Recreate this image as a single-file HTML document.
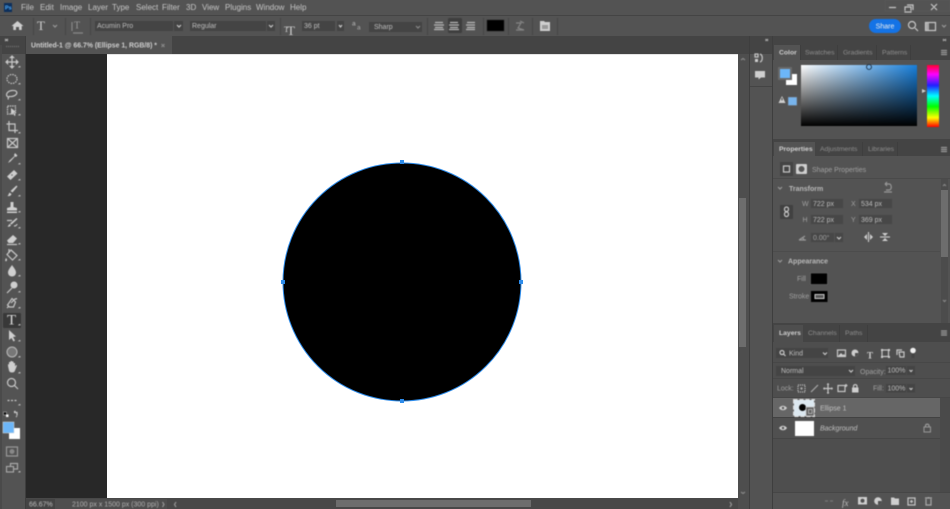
<!DOCTYPE html>
<html><head><meta charset="utf-8"><style>
html,body{margin:0;padding:0;width:950px;height:509px;overflow:hidden;background:#535353}
svg{display:block;position:absolute;left:0;top:0}
text{font-family:"Liberation Sans",sans-serif;font-size:7px;fill:#bdbdbd;dominant-baseline:middle}
.m text{font-size:8px;fill:#c6c6c6}
.i{fill:none;stroke:#c8c8c8;stroke-width:1.200}
.f{fill:#cfcfcf;stroke:none}
.soft{filter:blur(.5px)}
</style></head><body>
<svg width="950" height="509" viewBox="0 0 950 509" xmlns="http://www.w3.org/2000/svg">
<rect width="950" height="509" fill="#535353"/>
<rect y="15" width="950" height="1" fill="#444"/>
<rect y="36" width="950" height="18" fill="#444"/>
<rect x="0" y="36" width="26" height="9" fill="#444"/>
<rect x="0" y="45" width="2" height="464" fill="#4a4a4a"/>
<rect x="25" y="36" width="1" height="473" fill="#3e3e3e"/>
<rect x="26" y="36" width="146" height="18" fill="#535353"/>
<rect x="26" y="54" width="712" height="445" fill="#282828"/>
<rect x="107" y="54" width="631" height="444" fill="#fff"/>
<rect x="107" y="54" width="631" height="1" fill="#e4e4e4"/>
<rect x="738" y="54" width="11" height="455" fill="#4e4e4e"/>
<rect x="739" y="198" width="7" height="149" fill="#6d6d6d"/>
<rect x="26" y="498" width="712" height="11" fill="#484848"/>
<rect x="26" y="499" width="29" height="10" fill="#444"/>
<rect x="55" y="499" width="112" height="10" fill="#4e4e4e"/>
<rect x="336" y="500" width="195" height="7" fill="#6d6d6d"/>
<rect x="749" y="36" width="1" height="473" fill="#3e3e3e"/>
<rect x="772" y="36" width="1" height="473" fill="#3e3e3e"/>
<rect x="750" y="36" width="22" height="9" fill="#444"/>
<rect x="750" y="86" width="22" height="1" fill="#444"/>

<!-- panels -->
<rect x="773" y="36" width="177" height="9" fill="#444"/>
<rect x="773" y="45" width="177" height="15" fill="#444"/>
<rect x="774" y="45" width="26" height="15" fill="#535353"/>
<rect x="800" y="45" width="1" height="15" fill="#3e3e3e"/><rect x="837" y="45" width="1" height="15" fill="#3e3e3e"/><rect x="876" y="45" width="1" height="15" fill="#3e3e3e"/><rect x="910" y="45" width="1" height="15" fill="#3e3e3e"/>
<rect x="773" y="139" width="177" height="17" fill="#444"/>
<rect x="774" y="142" width="41" height="14" fill="#535353"/>
<rect x="862" y="142" width="1" height="14" fill="#3e3e3e"/><rect x="897" y="142" width="1" height="14" fill="#3e3e3e"/>
<rect x="773" y="323" width="177" height="19" fill="#444"/>
<rect x="774" y="325" width="29" height="17" fill="#4e4e4e"/>
<rect x="839" y="325" width="1" height="17" fill="#3e3e3e"/><rect x="867" y="325" width="1" height="17" fill="#3e3e3e"/>
<rect x="773" y="342" width="177" height="167" fill="#4e4e4e"/>
<rect x="773" y="178" width="177" height="1" fill="#4a4a4a"/>
<rect x="773" y="251" width="167" height="1" fill="#4c4c4c"/>
<rect x="773" y="362" width="177" height="1" fill="#474747"/>
<rect x="773" y="378" width="177" height="1" fill="#474747"/>
<rect x="773" y="397" width="177" height="1" fill="#464646"/>
<rect x="773" y="398" width="167" height="19" fill="#666"/>
<rect x="773" y="417" width="167" height="1" fill="#424242"/>
<rect x="773" y="418" width="167" height="20" fill="#505050"/>
<rect x="773" y="438" width="167" height="1" fill="#464646"/>
<rect x="940" y="398" width="10" height="95" fill="#4a4a4a"/>
<rect x="773" y="493" width="177" height="16" fill="#535353"/>
<rect x="773" y="492" width="177" height="1" fill="#464646"/>
<rect x="941" y="179" width="7" height="144" fill="#4c4c4c"/>
<rect x="941" y="190" width="7" height="67" fill="#6d6d6d"/>

<!-- Circle -->
<circle cx="402" cy="282" r="119" fill="#000" stroke="#2d8ceb" stroke-width="1"/>
<g fill="#2d8ceb"><rect x="400" y="160" width="4" height="4"/><rect x="400" y="399" width="4" height="4"/><rect x="281" y="280" width="4" height="4"/><rect x="519" y="280" width="4" height="4"/></g>

<g class="soft">
<!-- Menu -->
<rect x="4" y="3" width="8" height="9" fill="#0c2f5c"/><text x="5" y="8" style="font-size:5.500px;fill:#4fb0ff;font-weight:bold">Ps</text>
<g class="m">
<text x="21" y="8">File</text><text x="40" y="8">Edit</text><text x="60" y="8">Image</text><text x="88" y="8">Layer</text><text x="112" y="8">Type</text><text x="136" y="8">Select</text><text x="162" y="8">Filter</text><text x="186" y="8">3D</text><text x="202" y="8">View</text><text x="225" y="8">Plugins</text><text x="256" y="8">Window</text><text x="290" y="8">Help</text>
</g>
<!-- Window controls -->
<path class="i" d="M889 7.500h7M907 5h6v5M905 7h6v5h-6zM931 4l6 6M937 4l-6 6"/>
<rect x="885" y="0" width="65" height="11" fill="none" stroke="#5c5c5c" stroke-width=".6"/>

<!-- Options bar -->
<path class="f" d="M17.500 21l6 5h-1.800v4h-2.700v-3h-3v3H13.300v-4H11.500z"/>
<rect x="33" y="18" width="1" height="17" fill="#474747"/>
<text x="37" y="27" style="font-family:'Liberation Serif',serif;font-size:13px;fill:#d0d0d0">T</text>
<path class="i" d="M53 25l2 2 2-2" stroke-width=".9" style="stroke:#999"/>
<rect x="65" y="18" width="1" height="17" fill="#474747"/>
<text x="74" y="26" style="font-family:'Liberation Serif',serif;font-size:10px;fill:#999">T</text><path class="i" d="M72 22v9M73 33h10" style="stroke:#888" stroke-width=".8"/>
<rect x="90" y="18" width="1" height="17" fill="#474747"/>
<rect x="95" y="21" width="78" height="10" fill="#444"/><text x="97" y="26">Acumin Pro</text>
<rect x="174" y="21" width="9" height="10" fill="#444"/><path class="i" d="M177 25l2 2 2-2" stroke-width=".8"/>
<rect x="190" y="21" width="76" height="10" fill="#444"/><text x="192" y="26">Regular</text>
<rect x="267" y="21" width="8" height="10" fill="#444"/><path class="i" d="M269 25l2 2 2-2" stroke-width=".8"/>
<rect x="280" y="18" width="1" height="17" fill="#474747"/>
<text x="287" y="32" style="font-family:'Liberation Serif',serif;font-size:13px;fill:#d0d0d0">T</text><text x="284" y="30" style="font-family:'Liberation Serif',serif;font-size:8px;fill:#d0d0d0">T</text>
<rect x="302" y="21" width="33" height="10" fill="#444"/><text x="304" y="26">36 pt</text>
<rect x="337" y="21" width="7" height="10" fill="#444"/><path class="i" d="M339 25l1.500 2 1.500-2" stroke-width=".8"/>
<text x="352" y="24" style="font-size:6.500px">a</text><text x="357" y="28" style="font-size:6.500px;fill:#aaa">a</text>
<rect x="369" y="22" width="53" height="10" fill="#444"/><text x="374" y="27">Sharp</text><path class="i" d="M416 26l2 2 2-2" stroke-width=".8" style="stroke:#888"/>
<rect x="427" y="18" width="1" height="17" fill="#474747"/>
<rect x="448" y="18" width="14" height="15" rx="1" fill="#3e3e3e"/>
<path d="M435 22.500h8M434 25h10M435 27.500h8M434 29.500h10M450 22.500h8M449 25h10M450 27.500h8M449 29.500h10M467 22.500h8M466 25h9M467 27.500h8M466 29.500h9" fill="none" stroke="#b8b8b8" stroke-width="1.300"/>
<rect x="483" y="18" width="1" height="17" fill="#474747"/>
<rect x="487" y="20" width="17" height="11" fill="#000" stroke="#222" stroke-width=".5"/>
<rect x="508" y="18" width="1" height="17" fill="#474747"/>
<path class="i" d="M516 23h5l-3 5 6 2h-8M520 21l4 2" style="stroke:#858585"/>
<rect x="532" y="18" width="1" height="17" fill="#474747"/>
<path class="f" d="M540 21h4l1 1h5v9h-10z"/><rect x="542" y="25" width="6" height="4" fill="#999"/>
<rect x="557" y="18" width="1" height="17" fill="#474747"/>

<!-- Share etc -->
<rect x="869" y="19" width="32" height="14" rx="7" fill="#1473e6"/><text x="885" y="26.500" text-anchor="middle" style="fill:#eee;font-size:7px">Share</text>
<circle cx="912" cy="25" r="3.500" class="i"/><path class="i" d="M915 28l3 3"/>
<rect x="925.500" y="22.500" width="10" height="8" class="i"/><rect x="926" y="23" width="3" height="7" fill="#aaa"/>
<path class="i" d="M942 25l2 2 2-2" stroke-width=".8" style="stroke:#999"/>

<!-- Tab -->
<text x="31" y="45.500" textLength="126" lengthAdjust="spacingAndGlyphs" style="font-size:7.500px;fill:#d0d0d0;font-weight:bold">Untitled-1 @ 66.7% (Ellipse 1, RGB/8) *</text>
<path class="i" d="M161.500 44l3 3M164.500 44l-3 3" stroke-width=".7" style="stroke:#888"/>
<path class="i" d="M5 39l1.500 1-1.500 1M8 39l-1.500 1 1.500 1" stroke-width=".6" style="stroke:#aaa"/>
<path class="i" d="M6 46.500h14" stroke-width=".6" stroke-dasharray="1 1" style="stroke:#777"/>

<!-- Tools -->
<rect x="3" y="313" width="18" height="15" rx="1" fill="#383838"/>
<g>
<path class="i" d="M12 56.500v11M6.500 62h11M12 56l-1.500 1.500h3zM12 68l-1.500-1.500h3zM6 62l1.500-1.500v3zM18 62l-1.500-1.500v3z"/>
<ellipse cx="12" cy="79" rx="5" ry="4.500" class="i" stroke-dasharray="1.500 1"/>
<path class="i" d="M8 97c-3-2-1-6 4-6.500s6 2.500 3.500 4.500-5 1.500-6.500 1.500c-1 1-.5 2-1 3"/>
<rect x="7.500" y="106" width="8" height="8" class="i" stroke-dasharray="1.500 .8"/><path class="f" d="M11 108l5 4-2 .5 1.500 3-1 .5-1.500-3-2 1.500z"/>
<path class="i" d="M9 121v9.500h9M6.500 124h8.500v9"/>
<rect x="7.500" y="138.500" width="10" height="9" class="i"/><path class="i" d="M7.500 138.500l10 9M17.500 138.500l-10 9" stroke-width=".9"/>
<path class="f" d="M15 153l2.500 2.500-1.500 1.500-1-.5-4.500 5-2.500 1.500 1.500-2.500 5-4.500-.5-1z"/>
<path class="f" d="M14 170l3.500 3.500-7 6.500-3.500-3.500z"/><circle cx="12" cy="175" r=".8" fill="#666"/>
<path class="f" d="M16.500 185.500l1 1-5 6-2-1.500zM9.500 192.500l2 1.500c-.5 2-2.500 2.500-4 2 1-.8 1-2 2-3.500z"/>
<path class="f" d="M10.500 202h3v5l3.500 1v2.500H7V208l3.500-1zM7 211.500h10v1.500H7z"/>
<path class="f" d="M16.500 218l1 1-6 5.500-1.500-1zM9.500 224l1.500 1c-.5 1.500-2 2-3.500 1.500.8-.5 1-1.500 2-2.500z"/><path class="i" d="M7 220.500h5M14 226c1 0 3-.5 3-2" stroke-width=".8"/>
<path class="f" d="M13 235l4 3.500-4 4.500H8.500l-1.500-2.500z"/><path class="i" d="M7 244.500h10" stroke-width=".7"/>
<path class="i" d="M11 250l6 5.500-4.500 4.500-5.500-5.500zM9 249v4"/><path class="f" d="M6 258c1 1 1.500 2 .5 3s-2-.5-.5-3z"/>
<path class="f" d="M12 265c2 3 4 5 4 7.500s-2 4-4 4-4-1.500-4-4 2-4.500 4-7.500z"/>
<circle cx="14" cy="285" r="3.500" class="f"/><path class="i" d="M12 288l-5 5" stroke-width="1.600"/>
<path class="i" d="M12 298.500l3.500 3.500-2 5h-4l-2-2z M11 303l3-3M7 308l2-2M14 299.500l3-1"/>
<text x="7" y="321" style="font-family:'Liberation Serif',serif;font-size:15px;fill:#dcdcdc">T</text>
<path class="f" d="M9 330l7 6.500-3 .5 2 3.500-1.500 1-2-3.500L9 340z"/>
<circle cx="12" cy="352" r="5" fill="#777" stroke="#bbb" stroke-width="1"/>
<path class="f" d="M8 366v-2l1 .5v-2.500l1.500 0v-1l1.500 0 0 .5 1.500 0 0 1.500 1.500 0 0 3.500 1-1.500 1 .5-2 5c-.5 1.500-1.500 2-3 2s-2.500-.5-3-2z"/>
<circle cx="11.500" cy="382.500" r="4" class="i"/><path class="i" d="M14.500 385.500l3.500 3.500" stroke-width="1.500"/>
<path class="i" d="M7.500 400.500h2M11 400.500h2M14.500 400.500h2" stroke-width="1.600"/>
<rect x="3.500" y="412" width="3" height="3" fill="#000" stroke="#ccc" stroke-width=".5"/><rect x="6" y="414.500" width="2.500" height="2.500" fill="#fff"/>
<path class="i" d="M14 412.500h3v3M14 412l1.500-1M17 416l-1 1" stroke-width=".8"/>
<rect x="9" y="428" width="11" height="11" fill="#fff"/>
<rect x="3" y="422" width="11" height="11" fill="#6cb6f8" stroke="#ddd" stroke-width=".5"/>
<rect x="6.500" y="447" width="11" height="9" class="i" style="stroke:#999"/><circle cx="12" cy="451.500" r="2.500" fill="#888"/>
<rect x="10.500" y="463.500" width="7" height="5.500" class="i" style="stroke:#aaa"/><rect x="6.500" y="466.500" width="7" height="5.500" fill="#535353" stroke="#aaa" stroke-width="1.100"/>
</g>
<path fill="#b0b0b0" d="M19 66h1.500v1.500H18zM19 83h1.500v1.500H18zM19 99h1.500v1.500H18zM19 114h1.500v1.500H18zM19 132h1.500v1.500H18zM19 163h1.500v1.500H18zM19 179h1.500v1.500H18zM19 195h1.500v1.500H18zM19 211h1.500v1.500H18zM19 227h1.500v1.500H18zM19 243h1.500v1.500H18zM19 259h1.500v1.500H18zM19 275h1.500v1.500H18zM19 291h1.500v1.500H18zM19 307h1.500v1.500H18zM19 324h1.500v1.500H18zM19 340h1.500v1.500H18zM19 356h1.500v1.500H18zM19 372h1.500v1.500H18zM19 404h1.500v1.500H18zM19 471h1.500v1.500H18z"/>

<!-- Status -->
<text x="29" y="504.500" style="font-size:7px">66.67%</text>
<text x="72" y="504.500" style="font-size:7px;fill:#b0b0b0">2100 px x 1500 px (300 ppi)</text>
<path class="i" d="M162.500 502l1.500 2.500-1.500 2.500M176 502l-1.500 2.500 1.500 2.500M730 502l1.500 2.500-1.500 2.500" stroke-width=".7" style="stroke:#999"/>
<path class="i" d="M741 492l2 1.500 2-1.500M741 60l2-1.500 2 1.500" stroke-width=".7" style="stroke:#888"/>

<!-- Dock -->
<path class="i" d="M765.500 39l1 1-1 1M768 39l-1 1 1 1M943 39l1 1-1 1M946 39l-1 1 1 1" stroke-width=".6" style="stroke:#aaa"/>
<rect x="755" y="54" width="3" height="3" class="i" stroke-width=".8"/><rect x="755" y="59" width="3" height="3" class="f"/>
<path class="i" d="M760 54c3 1 3 7 0 8" stroke-width="1"/>
<path class="f" d="M755 71h10v6.500h-4l-2.500 2v-2H755z"/>

<!-- Color panel -->
<text x="779" y="52.500" style="fill:#d0d0d0;font-weight:bold;font-size:6.800px">Color</text>
<text x="805" y="52.500" style="fill:#8e8e8e;font-size:6.800px">Swatches</text>
<text x="843" y="52.500" style="fill:#8e8e8e;font-size:6.800px">Gradients</text>
<text x="882" y="52.500" style="fill:#8e8e8e;font-size:6.800px">Patterns</text>
<path class="i" d="M941 50.500h6M941 52.500h6M941 54.500h6" stroke-width=".8" style="stroke:#999"/>
<rect x="786" y="74" width="11" height="11" fill="#fff"/>
<rect x="778" y="67" width="14" height="13" fill="#6a6a6a"/><rect x="780" y="69" width="10" height="9" fill="#6cb6f8"/>
<defs>
<linearGradient id="h1"><stop offset="0" stop-color="#fff"/><stop offset="1" stop-color="#187fda"/></linearGradient>
<linearGradient id="h2" x2="0" y2="1"><stop offset="0" stop-color="#000" stop-opacity="0"/><stop offset="1" stop-color="#000"/></linearGradient>
<linearGradient id="h3" x2="0" y2="1"><stop offset="0" stop-color="#ff0030"/><stop offset=".15" stop-color="#f0f"/><stop offset=".33" stop-color="#2020ff"/><stop offset=".5" stop-color="#0ff"/><stop offset=".67" stop-color="#0f0"/><stop offset=".85" stop-color="#ff0"/><stop offset="1" stop-color="#f00"/></linearGradient>
</defs>
<rect x="801" y="65" width="116" height="61" fill="url(#h1)"/><rect x="801" y="65" width="116" height="61" fill="url(#h2)"/>
<rect x="927" y="65" width="12" height="62" fill="url(#h3)"/>
<circle cx="869" cy="67" r="2.500" fill="none" stroke="#123" stroke-width=".8"/>
<path class="f" d="M922 89l4 2-4 2z"/>
<path class="f" d="M782 96l3.500 7h-7z"/><rect x="781.500" y="98" width="1" height="2.500" fill="#444"/>
<rect x="788" y="97" width="9" height="8.500" fill="#78b4ec" stroke="#666" stroke-width=".5"/>

<!-- Properties -->
<text x="779" y="149" style="fill:#d0d0d0;font-weight:bold;font-size:6.800px">Properties</text>
<text x="820" y="149" style="fill:#8e8e8e;font-size:6.800px">Adjustments</text>
<text x="868" y="149" style="fill:#8e8e8e;font-size:6.800px">Libraries</text>
<path class="i" d="M941 147.500h6M941 149.500h6M941 151.500h6" stroke-width=".8" style="stroke:#999"/>
<rect x="780" y="162" width="13" height="14" fill="#444"/>
<rect x="783.500" y="166" width="6" height="6" class="i" stroke-width=".8"/>
<rect x="796" y="164" width="11" height="10" rx="1" class="f"/><circle cx="801.500" cy="169" r="3" fill="#555"/>
<text x="812" y="170" style="fill:#a0a0a0">Shape Properties</text>
<path class="i" d="M778 187l2 2 2-2" stroke-width=".8" style="stroke:#999"/>
<text x="789" y="189" style="font-weight:bold;fill:#b8b8b8">Transform</text>
<path class="i" d="M885 184h4c3 0 3 6 0 6h-3M885 184l2-2M885 184l2 2M884 192h8" stroke-width=".8" style="stroke:#999"/>
<rect x="780" y="205" width="13" height="14" fill="#414141"/>
<rect x="784.500" y="207" width="4" height="4.500" rx="2" class="i" stroke-width=".8"/><rect x="784.500" y="212" width="4" height="4.500" rx="2" class="i" stroke-width=".8"/>
<rect x="811" y="199" width="32" height="9" fill="#474747"/><rect x="859" y="199" width="33" height="9" fill="#474747"/>
<rect x="811" y="215" width="32" height="9" fill="#474747"/><rect x="859" y="215" width="33" height="9" fill="#474747"/>
<rect x="811" y="233" width="23" height="9" fill="#474747"/><rect x="835" y="233" width="8" height="9" fill="#474747"/>
<text x="802" y="204" style="fill:#a0a0a0">W</text><text x="813" y="204">722 px</text><text x="851" y="204" style="fill:#a0a0a0">X</text><text x="861" y="204">534 px</text>
<text x="802.500" y="220" style="fill:#a0a0a0">H</text><text x="813" y="220">722 px</text><text x="851" y="220" style="fill:#a0a0a0">Y</text><text x="861" y="220">369 px</text>
<path class="i" d="M799 240l6-4M799 240h7M803 238l1 2" stroke-width=".8" style="stroke:#999"/>
<text x="813" y="238" style="fill:#a0a0a0">0.00°</text><path class="i" d="M837 237l2 2 2-2" stroke-width=".7"/>
<path class="i" d="M868.500 232v10" stroke-width=".7"/><path class="f" d="M867 234v6l-3-3zM870 234v6l3-3z"/>
<path class="i" d="M880 237h10" stroke-width=".7"/><path class="f" d="M882 233h6l-3 3zM882 241h6l-3-3z"/>
<path class="i" d="M778 260l2 2 2-2" stroke-width=".8" style="stroke:#999"/>
<text x="788" y="261.500" style="font-weight:bold;fill:#b8b8b8">Appearance</text>
<text x="797" y="279" style="fill:#a0a0a0">Fill</text><rect x="810.500" y="273" width="17" height="11.500" fill="#000" stroke="#666" stroke-width=".7"/>
<text x="789" y="296.500" style="fill:#a0a0a0">Stroke</text><rect x="811" y="291" width="16.500" height="11" fill="#000"/><rect x="815" y="294.500" width="9" height="4" fill="#555" stroke="#ccc" stroke-width="1"/>
<path class="i" d="M943 186l1.500-1.500 1.500 1.500M943 300l1.500 1.500 1.500-1.500" stroke-width=".7" style="stroke:#888"/>

<!-- Layers -->
<text x="779" y="333" style="fill:#d0d0d0;font-weight:bold;font-size:6.800px">Layers</text>
<text x="808" y="333" style="fill:#8e8e8e;font-size:6.800px">Channels</text>
<text x="845" y="333" style="fill:#8e8e8e;font-size:6.800px">Paths</text>
<path class="i" d="M941 331h6M941 333h6M941 335h6" stroke-width=".8" style="stroke:#999"/>
<rect x="776" y="348" width="52" height="10" fill="#444"/>
<circle cx="782" cy="352.500" r="2" class="i" stroke-width=".8"/><path class="i" d="M783.500 354l2 2" stroke-width=".8"/><text x="789" y="353.500">Kind</text><path class="i" d="M823 352.500l2 2 2-2" stroke-width=".7"/>
<rect x="837.500" y="350" width="8" height="6.500" class="i" stroke-width=".9"/><path class="f" d="M838 356l3-3 2 2 1-1 1.500 2z"/>
<circle cx="855" cy="353" r="3.500" class="f"/><path fill="#4e4e4e" d="M855 353h3.500a3.500 3.500 0 0 1-3.500 3.500z"/>
<text x="867" y="356.500" style="font-family:'Liberation Serif',serif;font-size:9px;fill:#d0d0d0;font-weight:bold">T</text>
<rect x="882" y="350" width="6.500" height="6.500" class="i" stroke-width=".9"/><path class="f" d="M881 349h2v2h-2zM888 349h2v2h-2zM881 356h2v2h-2zM888 356h2v2h-2z"/>
<path class="i" d="M899 352h5v5h-4zM897 355v-5h5" stroke-width=".9"/>
<circle cx="913" cy="350.500" r="2.800" fill="#f0f0f0"/><rect x="911.500" y="353.500" width="3" height="4.500" fill="#444"/>
<rect x="776" y="366" width="79" height="10" fill="#444"/><text x="781" y="371">Normal</text><path class="i" d="M849 370l2 2 2-2" stroke-width=".7"/>
<text x="860" y="372" style="fill:#a0a0a0">Opacity:</text><rect x="886" y="366" width="20" height="9" fill="#444"/><text x="887.500" y="370.500">100%</text><rect x="907" y="366" width="8" height="9" fill="#444"/><path class="i" d="M909.500 370l1.500 1.500 1.500-1.500" stroke-width=".7"/>
<text x="777" y="388.500" style="fill:#a0a0a0">Lock:</text>
<rect x="798" y="385" width="7" height="7" class="i" stroke-width=".6" stroke-dasharray="1 1"/><circle cx="801.500" cy="388.500" r="1.200" fill="#aaa"/>
<path class="i" d="M811 392l7-7" stroke-width="1.200" style="stroke:#aaa"/>
<path class="i" d="M828 384v9M823.500 388.500h9"/><path class="f" d="M828 383l-1.500 1.500h3zM828 394l-1.500-1.500h3zM823 388.500l1.500-1.500v3zM833 388.500l-1.500-1.500v3z"/>
<rect x="838" y="385.500" width="7" height="6" class="i" stroke-width=".8"/><path class="i" d="M846 384v3M844.500 385.500h3" stroke-width=".7"/>
<rect x="852" y="387.500" width="6.500" height="5" class="f"/><path class="i" d="M853.500 388v-2a1.800 1.800 0 0 1 3.500 0v2" stroke-width=".9"/>
<text x="873" y="388.500" style="fill:#a0a0a0">Fill:</text><rect x="886" y="384" width="20" height="8.500" fill="#444"/><text x="887.500" y="388.500">100%</text><rect x="907" y="384" width="8" height="8.500" fill="#444"/><path class="i" d="M909.500 388l1.500 1.500 1.500-1.500" stroke-width=".7"/>

<path class="f" d="M779 408c2-3 6-3 8 0-2 3-6 3-8 0z"/><circle cx="783" cy="408" r="1.200" fill="#555"/>
<path class="f" d="M779 428c2-3 6-3 8 0-2 3-6 3-8 0z"/><circle cx="783" cy="428" r="1.200" fill="#4e4e4e"/>
<rect x="794" y="400" width="20" height="16" fill="#dce8f0"/>
<rect x="793.500" y="399.500" width="21" height="17" fill="none" stroke="#ddd" stroke-width="1" stroke-dasharray="4 2"/>
<circle cx="802.500" cy="407.500" r="3.500" fill="#000"/>
<rect x="806" y="407" width="8" height="9" fill="#5f5f5f" stroke="#ccc" stroke-width=".8"/><rect x="808.500" y="409.500" width="3.500" height="4" fill="none" stroke="#ddd" stroke-width=".6"/>
<text x="820" y="408.500" style="fill:#c0c0c0">Ellipse 1</text>
<rect x="795" y="421" width="19" height="15" fill="#fff"/>
<text x="820" y="428.500" style="font-style:italic;fill:#c0c0c0">Background</text>
<rect x="924" y="427" width="6.500" height="5" fill="none" stroke="#999" stroke-width="1"/><path class="i" d="M925.500 427v-1.500a1.800 1.800 0 0 1 3.500 0v1.500" stroke-width=".9" style="stroke:#999"/>

<!-- Layers footer -->
<path class="i" d="M825 501h3M830 501h3" stroke-width="1.400" style="stroke:#777"/>
<text x="842" y="504" style="font-family:'Liberation Serif',serif;font-style:italic;font-size:9px;fill:#c0c0c0">fx</text>
<rect x="858" y="497" width="9" height="7.500" class="f"/><circle cx="862.500" cy="500.800" r="2" fill="#4e4e4e"/>
<circle cx="878" cy="501" r="3.800" class="f"/><path fill="#4e4e4e" d="M878 501h3.800a3.800 3.800 0 0 1-3.800 3.800z"/>
<path class="f" d="M891 497.500h3l1 1h4v6.500h-8z"/>
<rect x="908" y="498" width="7" height="7" class="i" stroke-width=".9"/><path class="i" d="M910 501.500h3M911.500 500v3" stroke-width=".7"/>
<path class="i" d="M925 498h7M926 499v6h5v-6M928.500 497v1" stroke-width="1" style="stroke:#aaa"/>
</g>
</svg>
</body></html>
